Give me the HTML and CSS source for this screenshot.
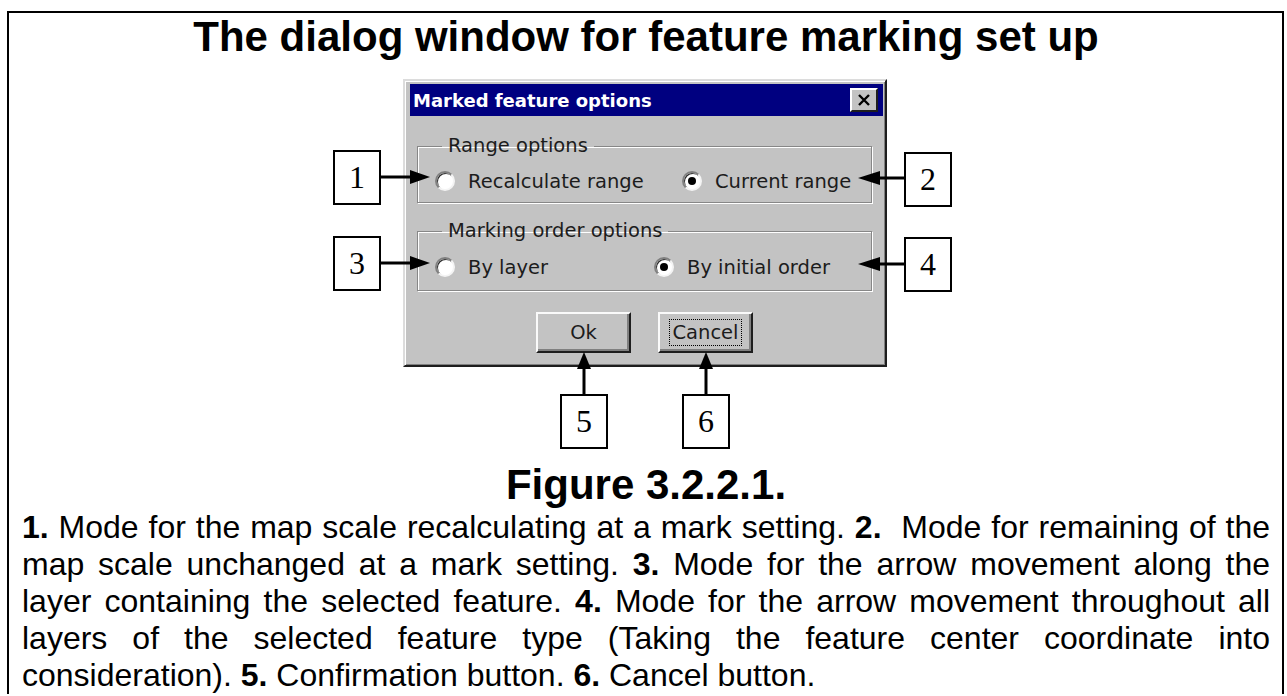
FILE: index.html
```html
<!DOCTYPE html>
<!-- Feature marking dialog figure -->
<html>
<head>
    <title>Marked feature options</title>
    <link rel="stylesheet" href="styles.css">
</head>
<body>
    <div class="page">
        <h1 class="title">The dialog window for feature marking set up</h1>

        <div class="figure">
            <div class="dialog">
                <div class="titlebar">
                    <span class="titlebar-text">Marked feature options</span>
                    <span class="close-btn">
                        <svg width="14" height="12" viewBox="0 0 14 12">
                            <path d="M2 1 L12 11 M12 1 L2 11" stroke="#000" stroke-width="2.4" fill="none"/>
                        </svg>
                    </span>
                </div>

                <fieldset class="group group-range">
                    <legend>Range options</legend>
                    <div class="opts">
                        <div class="opt"><span class="radio"></span>Recalculate range</div>
                        <div class="opt"><span class="radio checked"></span>Current range</div>
                    </div>
                </fieldset>

                <fieldset class="group group-order">
                    <legend>Marking order options</legend>
                    <div class="opts">
                        <div class="opt"><span class="radio"></span>By layer</div>
                        <div class="opt"><span class="radio checked"></span>By initial order</div>
                    </div>
                </fieldset>

                <div class="buttons">
                    <div class="btn">Ok</div>
                    <div class="btn"><span class="focus">Cancel</span></div>
                </div>
            </div>

            <!-- numbered callouts around the dialog -->
            <div class="callout c1">1</div>
            <div class="callout c2">2</div>
            <div class="callout c3">3</div>
            <div class="callout c4">4</div>
            <div class="callout c5">5</div>
            <div class="callout c6">6</div>

            <svg class="arrows" width="619" height="370" viewBox="0 0 619 370">
                <g stroke="#000" stroke-width="3" fill="none">
                    <path d="M48 98 H80"/>
                    <path d="M571 99 H544"/>
                    <path d="M48 184 H80"/>
                    <path d="M571 185 H544"/>
                    <path d="M251 315 V287"/>
                    <path d="M373 315 V287"/>
                </g>
                <g fill="#000">
                    <polygon points="77,91 97,98 77,105"/>
                    <polygon points="547,92 525,99 547,106"/>
                    <polygon points="77,177 97,184 77,191"/>
                    <polygon points="547,178 525,185 547,192"/>
                    <polygon points="244,290 251,273 258,290"/>
                    <polygon points="366,290 373,273 380,290"/>
                </g>
            </svg>
        </div>

        <h2 class="caption">Figure 3.2.2.1.</h2>
        <p class="desc"><b>1.</b> Mode for the map scale recalculating at a mark setting. <b>2.</b>&nbsp; Mode for remaining of the map scale unchanged at a mark setting. <b>3.</b> Mode for the arrow movement along the layer containing the selected feature. <b>4.</b> Mode for the arrow movement throughout all layers of the selected feature type (Taking the feature center coordinate into consideration). <b>5.</b> Confirmation button. <b>6.</b> Cancel button.</p>
    </div>
</body>
</html>
```

FILE: styles.css
```css
body {
    margin: 0;
    font-family: "Liberation Sans", Arial, sans-serif;
    color: #000;
    background: #fff;
}

/* framed page, bottom edge runs off the screen */
.page {
    margin: 11px 3px 0 7px;
    border: 2px solid #000;
    border-bottom: 0;
    padding: 0 12px 0 13px;
}

.title {
    margin: 0;
    font-size: 42px;
    line-height: 48px;
    font-weight: bold;
    text-align: center;
}

/* figure: dialog plus the numbered callouts */
.figure {
    position: relative;
    width: 619px;
    height: 370px;
    margin: 18px 0 0 311px;
}

.dialog {
    box-sizing: border-box;
    width: 484px;
    height: 288px;
    margin-left: 70px;
    padding: 3px 2px 0 5px;
    background: #c3c3c3;
    border: 2px solid;
    border-color: #dcdcdc #1e1e1e #1e1e1e #dcdcdc;
    box-shadow: inset 1px 1px 0 #fff, inset -1px -1px 0 #808080;
    font-family: "DejaVu Sans", sans-serif;
    font-size: 19.5px;
    color: #1c1c1c;
}

.titlebar {
    height: 32px;
    padding: 0 5px 0 3px;
    background: #000080;
    display: flex;
    align-items: center;
    justify-content: space-between;
}

.titlebar-text {
    color: #fff;
    font-weight: bold;
    font-size: 18px;
}

.close-btn {
    box-sizing: border-box;
    width: 28px;
    height: 24px;
    background: #c3c3c3;
    border: 2px solid;
    border-color: #fff #1e1e1e #1e1e1e #fff;
    display: flex;
    align-items: center;
    justify-content: center;
}

/* group boxes */
.group {
    min-width: 0;
    margin: 0 11px 0 7px;
    padding: 13px 0 9px 16px;
    border: 1px solid #878787;
    box-shadow: 1px 1px 0 #fff, inset 1px 1px 0 #fff;
}

.group legend {
    margin-left: 8px;
    padding: 0 6px;
    line-height: 20px;
}

.group-range { margin-top: 20px; }
.group-order { margin-top: 18px; padding: 14px 0 11px 16px; }

.opts {
    display: grid;
}
.group-range .opts { grid-template-columns: 247px auto; }
.group-order .opts { grid-template-columns: 219px auto; }

.opt {
    display: flex;
    align-items: center;
    gap: 13px;
    height: 24px;
    padding-left: 1px;
}

.radio {
    box-sizing: border-box;
    width: 20px;
    height: 20px;
    border-radius: 50%;
    background: #fff;
    border: 2px solid;
    border-color: #808080 #f4f4f4 #f4f4f4 #808080;
    box-shadow: inset 1px 1px 0 #303030;
    display: flex;
    align-items: center;
    justify-content: center;
}

.radio.checked::after {
    content: "";
    width: 8px;
    height: 8px;
    border-radius: 50%;
    background: #000;
}

.buttons {
    display: flex;
    justify-content: center;
    gap: 27px;
    margin: 21px 4px 0 0;
}

.btn {
    box-sizing: border-box;
    width: 95px;
    height: 41px;
    border: 2px solid;
    border-color: #fafafa #1e1e1e #1e1e1e #fafafa;
    box-shadow: inset -2px -2px 0 #808080;
    display: flex;
    align-items: center;
    justify-content: center;
}

.btn .focus {
    outline: 1px dotted #000;
    outline-offset: 1px;
    padding: 0 1px;
}

/* callout boxes */
.callout {
    position: absolute;
    box-sizing: border-box;
    width: 48px;
    height: 55px;
    border: 2px solid #000;
    background: #fff;
    font-family: "Liberation Serif", "Times New Roman", serif;
    font-size: 32px;
    display: flex;
    align-items: center;
    justify-content: center;
}

.c1 { left: 0; top: 71px; }
.c2 { left: 571px; top: 73px; }
.c3 { left: 0; top: 157px; }
.c4 { left: 571px; top: 158px; }
.c5 { left: 227px; top: 315px; }
.c6 { left: 349px; top: 315px; }

.arrows {
    position: absolute;
    left: 0;
    top: 0;
    z-index: 2;
}

.caption {
    margin: 12px 0 0;
    font-size: 42px;
    line-height: 48px;
    font-weight: bold;
    text-align: center;
}

.desc {
    margin: 0;
    font-size: 32px;
    line-height: 37px;
    text-align: justify;
}
```
